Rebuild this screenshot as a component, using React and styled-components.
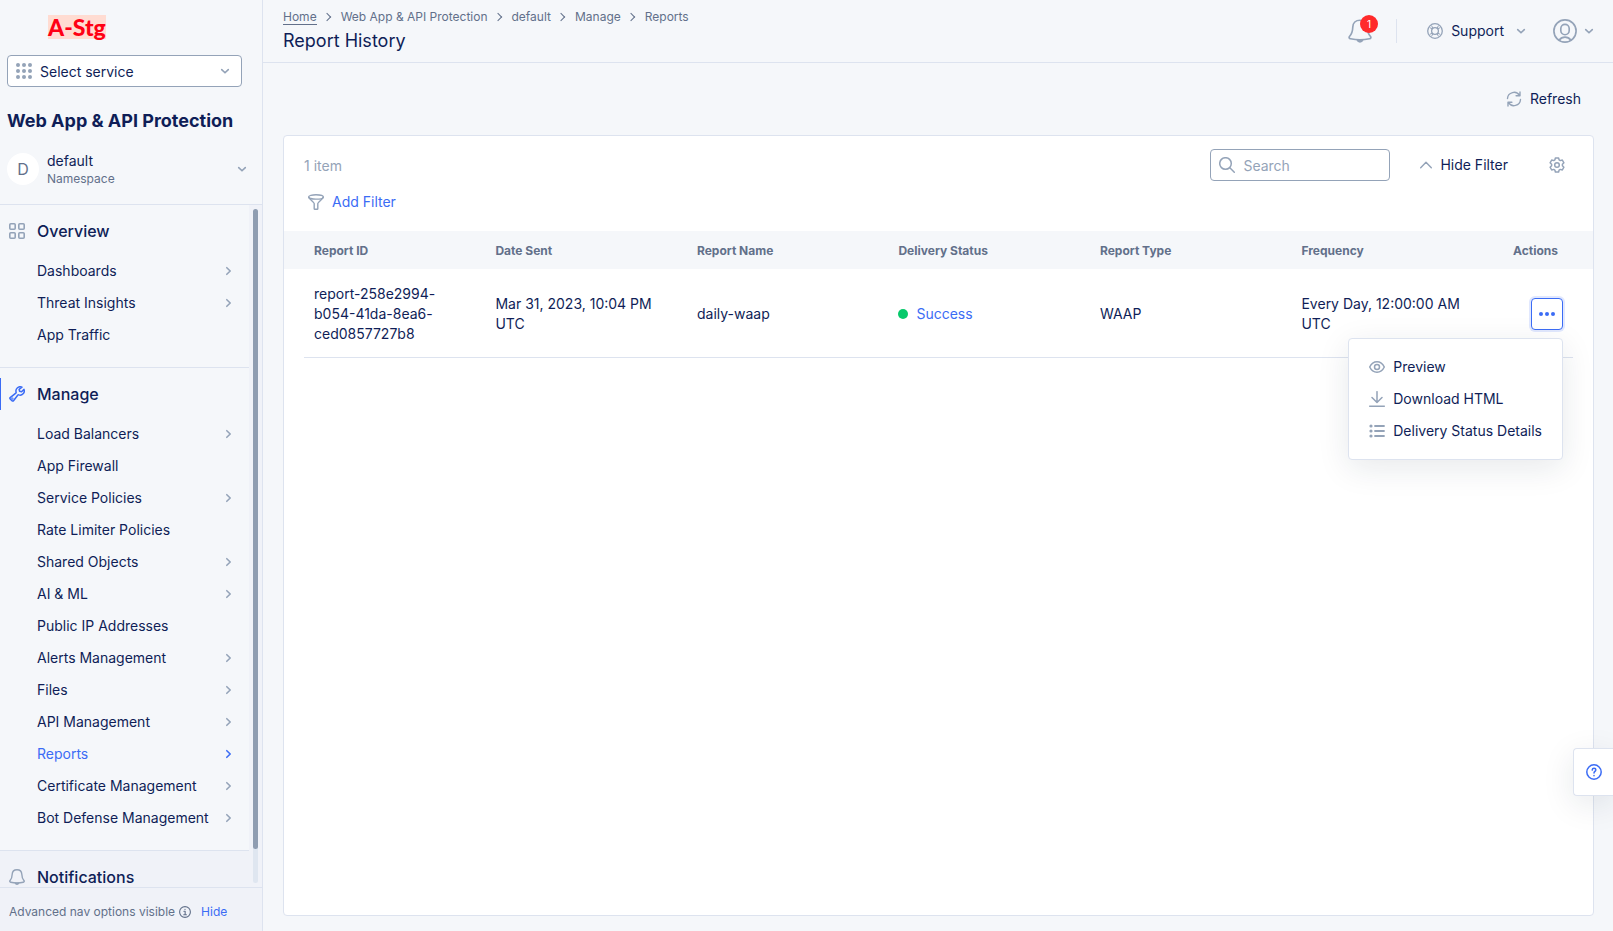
import { useState } from 'react'
import styled, { createGlobalStyle, css } from 'styled-components'

const navy = '#0f1e57'
const slate = '#62708a'
const steel = '#94a3b8'
const blue = '#3b6cf5'
const line = '#dde3ef'
const paper = '#f5f7fa'
const lilac = '#f0f2f8'

const GlobalStyle = createGlobalStyle`
    *, *::before, *::after {
        box-sizing: border-box;
    }
    body {
        margin: 0;
        background: ${paper};
        color: ${navy};
        font-family: Inter, 'Liberation Sans', sans-serif;
        font-size: 14px;
        line-height: 20px;
    }
    button, input, select {
        font: inherit;
        color: inherit;
    }
    button {
        padding: 0;
        border: 0;
        background: none;
        cursor: pointer;
    }
    a {
        color: inherit;
        text-decoration: none;
    }
    h1, h2, h3, ul, ol {
        margin: 0;
        padding: 0;
        list-style: none;
    }
`

const Shell = styled.div`
    display: flex;
    min-height: 100vh;
`

/* icons */

const Svg = styled.svg`
    display: block;
    flex: none;
    fill: none;
    stroke: ${props => props.$color || steel};
    stroke-width: ${props => props.$weight || 1.4};
    stroke-linecap: round;
    stroke-linejoin: round;
`

const Icon = ({ size = 16, color, weight, children }) => (
    <Svg width={size} height={size} viewBox="0 0 16 16" $color={color} $weight={weight} aria-hidden="true">
        {children}
    </Svg>
)

const chevrons = {
    right: 'M3.8 1.7 7.2 5 3.8 8.3',
    down: 'M1.7 3.6 5 6.8 8.3 3.6',
}

const Chevron = ({ to = 'right', color }) => (
    <Svg width="10" height="10" viewBox="0 0 10 10" $color={color} $weight={1.6} aria-hidden="true">
        <path d={chevrons[to]} />
    </Svg>
)

const DotsIcon = () => (
    <Icon>
        <g fill={steel} stroke="none">
            {[2, 8, 14].map(y => [2, 8, 14].map(x => <circle key={`${x}-${y}`} cx={x} cy={y} r="2" />))}
        </g>
    </Icon>
)

const GridIcon = () => (
    <Icon weight={1.6}>
        <rect x=".8" y=".8" width="5.400" height="5.400" rx="1" />
        <rect x="9.800" y=".8" width="5.400" height="5.400" rx="1" />
        <rect x=".8" y="9.800" width="5.400" height="5.400" rx="1" />
        <rect x="9.800" y="9.800" width="5.400" height="5.400" rx="1" />
    </Icon>
)

const WrenchIcon = () => (
    <Icon color={blue} weight={1.5}>
        <path d="M13 1.200a4.200 4.200 0 0 0-5.900 4.900c.1.4 0 .8-.3 1L1.200 11.600a1 1 0 0 0 0 1.400l1.800 1.800a1 1 0 0 0 1.500-.1l4.200-5.500c.3-.3.7-.4 1-.3a4.200 4.200 0 0 0 5.300-5.500l-2.400 2.300-2-.4-.5-2z" />
        <circle cx="3.400" cy="12.600" r=".4" />
    </Icon>
)

const BellIcon = ({ size, weight = 1.4 }) => (
    <Icon size={size} weight={weight}>
        <path d="M8 .8C5.100.8 3.300 2.800 3.200 5.300 3.100 8.300 2.800 9.600 1.100 11.500c-.7.8-.3 1.500.6 1.700 4 .8 8.600.8 12.600 0 .9-.2 1.300-.9.6-1.700C13.200 9.600 12.900 8.300 12.800 5.300 12.700 2.800 10.900.8 8 .8z" />
        <path d="M6.300 14.300c.6 1.200 2.800 1.200 3.400 0z" fill={steel} />
    </Icon>
)

const InfoIcon = () => (
    <Icon size={12} color={slate} weight={1.500}>
        <circle cx="8" cy="8" r="7.200" />
        <path d="M6.500 7h1.700v4.500M6.300 11.700h3.600M8 4.300v.3" />
    </Icon>
)

const SupportIcon = () => (
    <Icon weight={1.300}>
        <circle cx="8" cy="8" r="7.300" />
        <circle cx="8" cy="8" r="3.400" />
        <path d="M3 4.800l2.400 1M4.800 3l1 2.400M13 4.800l-2.400 1M11.200 3l-1 2.400M3 11.200l2.400-1M4.800 13l1-2.400M13 11.200l-2.400-1M11.200 13l-1-2.400" strokeWidth="1" />
    </Icon>
)

const PersonIcon = () => (
    <Icon size={24} weight={1.1}>
        <circle cx="8" cy="8" r="7.400" />
        <rect x="5.200" y="3.600" width="5.600" height="6.900" rx="2.800" />
        <path d="M4.200 14c1-1.400 2.200-1.900 3.800-1.900s2.800.5 3.800 1.900" />
    </Icon>
)

const RefreshIcon = () => (
    <Icon>
        <path d="M1.500 7.500A6.500 6.500 0 0 1 13.600 4.600M14 .9v3.900h-3.900M14.500 8.500A6.500 6.500 0 0 1 2.400 11.400M2 15.100v-3.900h3.900" />
    </Icon>
)

const SearchIcon = () => (
    <Icon weight={1.5}>
        <circle cx="6.500" cy="6.500" r="5.800" />
        <path d="M10.800 10.800l4.500 4.500" />
    </Icon>
)

const GearIcon = () => (
    <Icon weight={1.500}>
        <path d="M6.400.9h3.200l.5 2 1.200.7 2-.6 1.600 2.800-1.500 1.400v1.600l1.500 1.400-1.600 2.800-2-.6-1.200.7-.5 2H6.400l-.5-2-1.200-.7-2 .6-1.600-2.800 1.500-1.400V7.200L1.100 5.800 2.700 3l2 .6 1.200-.7z" />
        <circle cx="8" cy="8" r="2.300" />
    </Icon>
)

const FunnelIcon = () => (
    <Icon>
        <ellipse cx="8" cy="2.900" rx="7.300" ry="2.200" />
        <path d="M.7 3.200c.2 1.500 5.500 5 5.500 6.300v5.200c0 .4.3.6.7.6h2.200c.4 0 .7-.2.7-.6V9.500c0-1.300 5.300-4.800 5.500-6.300" />
    </Icon>
)

const EyeIcon = () => (
    <Icon weight={1.500}>
        <path d="M.7 8C2.300 4.600 4.900 2.800 8 2.800S13.700 4.600 15.300 8C13.700 11.400 11.100 13.200 8 13.200S2.300 11.400.7 8z" />
        <circle cx="8" cy="8" r="2.500" />
    </Icon>
)

const DownloadIcon = () => (
    <Icon weight={1.5}>
        <path d="M8 .7v10.600M3 6.500l5 5 5-5M.7 15.200h14.600" />
    </Icon>
)

const ListIcon = () => (
    <Icon weight={1.800}>
        <path d="M6 3h9M6 8h9M6 13h9" />
        <g fill={steel} stroke="none">
            <circle cx="2" cy="3" r="1.600" />
            <circle cx="2" cy="8" r="1.600" />
            <circle cx="2" cy="13" r="1.600" />
        </g>
    </Icon>
)

const MoreIcon = () => (
    <Icon>
        <g fill={blue} stroke="none">
            <circle cx="2" cy="8" r="2" />
            <circle cx="8" cy="8" r="2" />
            <circle cx="14" cy="8" r="2" />
        </g>
    </Icon>
)

const HelpIcon = () => (
    <Icon color={blue} weight={1.500}>
        <circle cx="8" cy="8" r="7.200" />
        <path d="M6.200 6.100C6.300 4.900 7 4.300 8 4.300s1.800.7 1.800 1.700c0 1.300-1.800 1.500-1.800 3M8 11.500v.2" />
    </Icon>
)

/* sidebar */

const Sidebar = styled.aside`
    position: sticky;
    top: 0;
    display: flex;
    flex-direction: column;
    flex: none;
    width: 263px;
    height: 100vh;
    border-right: 1px solid ${line};
`

const SidebarTop = styled.div`
    display: flex;
    flex-direction: column;
    padding: 15px 15px 17px 7px;
    border-bottom: 1px solid ${line};
`

const Logo = styled.a`
    align-self: flex-start;
    margin: 0 0 16px 41px;
    background: #ffdcd2;
    color: #ff0014;
    font-family: Lato, 'Open Sans', sans-serif;
    font-size: 23px;
    font-weight: 900;
    line-height: 24px;
`

const ServicePicker = styled.label`
    display: flex;
    align-items: center;
    gap: 8px;
    height: 32px;
    margin-right: 5px;
    padding: 0 11px 0 8px;
    border: 1px solid ${steel};
    border-radius: 4px;
    background: #fff;
`

const ServiceSelect = styled.select`
    flex: 1;
    min-width: 0;
    padding: 2px 0 0;
    border: 0;
    outline: 0;
    background: none;
    appearance: none;
`

const ProductName = styled.h2`
    margin: 22px 0 18px;
    font-size: 18px;
    font-weight: 700;
    line-height: 24px;
    white-space: nowrap;
`

const Namespace = styled.button`
    display: flex;
    align-items: center;
    gap: 8px;
    text-align: left;
`

const Initial = styled.span`
    display: flex;
    align-items: center;
    justify-content: center;
    width: 32px;
    height: 32px;
    border-radius: 50%;
    background: #fff;
    color: ${slate};
    font-size: 16px;
`

const NamespaceText = styled.span`
    display: flex;
    flex: 1;
    flex-direction: column;
    small {
        color: ${slate};
        font-size: 12px;
        line-height: 16px;
    }
`

const NavArea = styled.div`
    display: flex;
    flex: 1;
    min-height: 0;
    background: ${lilac};
`

const Nav = styled.nav`
    flex: 1;
    overflow-y: auto;
    scrollbar-width: none;
`

const Track = styled.div`
    flex: none;
    width: 5px;
    margin: 4px 4px;
    border-radius: 3px;
    background: #dfe6f0;
`

const Thumb = styled.div`
    height: 95%;
    border-radius: 3px;
    background: #8f9db1;
`

const Section = styled.section`
    padding: 10px 0 16px;
    border-bottom: 1px solid ${line};
    background: ${props => props.$soft ? lilac : paper};
`

const SectionTitle = styled.h3`
    display: flex;
    align-items: center;
    gap: 12px;
    height: 32px;
    margin-bottom: 8px;
    padding-left: 9px;
    font-size: 16px;
    font-weight: 500;
    ${props => props.$current && css`
        box-shadow: inset 1px 0 ${blue};
    `}
`

const NavLink = styled.a`
    display: flex;
    align-items: center;
    justify-content: space-between;
    height: 32px;
    padding: 0 16px 0 37px;
    color: ${props => props.$current ? blue : navy};
`

const NavFooter = styled.div`
    display: flex;
    align-items: center;
    height: 44px;
    padding: 4px 9px 0;
    gap: 4px;
    border-top: 1px solid ${line};
    background: ${lilac};
    color: ${slate};
    font-size: 12px;
`

const HideButton = styled.button`
    margin-left: 6px;
    color: ${blue};
`

/* top bar */

const Page = styled.div`
    display: flex;
    flex: 1;
    flex-direction: column;
    min-width: 0;
`

const TopBar = styled.header`
    display: flex;
    align-items: center;
    justify-content: space-between;
    height: 63px;
    padding: 0 19px 0 20px;
    border-bottom: 1px solid ${line};
`

const Crumbs = styled.ol`
    display: flex;
    align-items: center;
    margin-bottom: 4px;
    color: ${slate};
    font-size: 12px;
    line-height: 16px;
    li {
        display: flex;
        align-items: center;
    }
    li + li::before {
        content: '';
        width: 6px;
        height: 6px;
        margin: 0 11px 0 7px;
        border-top: 1px solid ${slate};
        border-right: 1px solid ${slate};
        transform: rotate(45deg);
    }
    li:first-child a {
        border-bottom: 1px solid ${slate};
        line-height: 14px;
    }
`

const Title = styled.h1`
    font-size: 18px;
    font-weight: 400;
    line-height: 24px;
`

const TopActions = styled.div`
    display: flex;
    align-items: center;
`

const Alerts = styled.button`
    position: relative;
    margin-right: 24px;
`

const Badge = styled.span`
    position: absolute;
    top: -4px;
    right: -6px;
    width: 18px;
    height: 18px;
    border-radius: 50%;
    background: #ff2a2a;
    color: #fff;
    font-size: 10px;
    line-height: 18px;
`

const SupportButton = styled.button`
    display: flex;
    align-items: center;
    gap: 8px;
    height: 24px;
    margin-right: 27px;
    padding-left: 30px;
    border-left: 1px solid ${line};
    svg:last-child {
        margin-left: 4px;
    }
`

const ProfileButton = styled.button`
    display: flex;
    align-items: center;
    gap: 7px;
`

/* content */

const Content = styled.main`
    display: flex;
    flex: 1;
    flex-direction: column;
    padding: 20px 19px 15px 20px;
`

const IconButton = styled.button`
    display: flex;
    align-items: center;
    gap: 8px;
    height: ${props => props.$tall ? 32 : 24}px;
    color: ${props => props.$link ? blue : navy};
`

const PageActions = styled.div`
    display: flex;
    justify-content: flex-end;
    margin-bottom: 20px;
    padding-right: 13px;
`

const Card = styled.section`
    flex: 1;
    border: 1px solid ${line};
    border-radius: 4px;
    background: #fff;
`

const Toolbar = styled.div`
    display: flex;
    align-items: center;
    padding: 13px 28px 9px 20px;
`

const Count = styled.span`
    flex: 1;
    padding-top: 2px;
    color: ${steel};
`

const SearchBox = styled.label`
    display: flex;
    align-items: center;
    gap: 8px;
    width: 180px;
    height: 32px;
    margin-right: 30px;
    padding: 0 8px;
    border: 1px solid ${steel};
    border-radius: 4px;
    input {
        flex: 1;
        min-width: 0;
        padding: 2px 0 0;
        border: 0;
        outline: 0;
        background: none;
    }
    input::placeholder {
        color: ${steel};
    }
`

const Settings = styled.button`
    margin-left: 41px;
`

const Filters = styled.div`
    padding: 0 24px 17px;
`

const TableWrap = styled.div`
    padding: 0 20px;
`

const Table = styled.table`
    width: 100%;
    table-layout: fixed;
    border-collapse: separate;
    border-spacing: 0;
    text-align: left;
    th {
        height: 38px;
        padding: 2px 10px 0;
        background: ${paper};
        color: ${slate};
        font-size: 12px;
        font-weight: 700;
    }
    th:first-child {
        width: 14.3%;
        box-shadow: -20px 0 ${paper};
    }
    th:last-child {
        width: 80px;
        padding-right: 15px;
        box-shadow: 20px 0 ${paper};
        text-align: right;
    }
    td {
        padding: 15px 10px 13px;
        border-bottom: 1px solid ${line};
    }
`

const ReportId = styled.div`
    max-width: 130px;
`

const Status = styled.a`
    display: flex;
    align-items: center;
    gap: 8px;
    color: ${blue};
    &::before {
        content: '';
        width: 10px;
        height: 10px;
        border-radius: 50%;
        background: #07c96b;
    }
`

const MenuAnchor = styled.div`
    position: relative;
    display: flex;
    justify-content: flex-end;
`

const MoreButton = styled.button`
    display: flex;
    align-items: center;
    justify-content: center;
    width: 32px;
    height: 32px;
    border: 1px solid ${blue};
    border-radius: 4px;
    background: #fff;
    box-shadow: 0 0 0 2px #e1e8fe;
`

const Menu = styled.ul`
    position: absolute;
    top: 40px;
    right: 0;
    z-index: 1;
    padding: 12px 20px;
    border: 1px solid ${line};
    border-radius: 4px;
    background: #fff;
    box-shadow: 0 8px 32px rgba(20, 40, 60, .1);
    white-space: nowrap;
`

const HelpTab = styled.button`
    position: fixed;
    right: 0;
    bottom: 135px;
    display: flex;
    align-items: center;
    width: 40px;
    height: 48px;
    padding-left: 12px;
    border: 1px solid ${line};
    border-right: 0;
    border-radius: 4px 0 0 4px;
    background: #fff;
    box-shadow: 0 8px 32px rgba(20, 40, 60, .1);
`

const overview = [
    { label: 'Dashboards', more: true },
    { label: 'Threat Insights', more: true },
    { label: 'App Traffic' },
]

const manage = [
    { label: 'Load Balancers', more: true },
    { label: 'App Firewall' },
    { label: 'Service Policies', more: true },
    { label: 'Rate Limiter Policies' },
    { label: 'Shared Objects', more: true },
    { label: 'AI & ML', more: true },
    { label: 'Public IP Addresses' },
    { label: 'Alerts Management', more: true },
    { label: 'Files', more: true },
    { label: 'API Management', more: true },
    { label: 'Reports', more: true, current: true },
    { label: 'Certificate Management', more: true },
    { label: 'Bot Defense Management', more: true },
]

const crumbs = ['Home', 'Web App & API Protection', 'default', 'Manage', 'Reports']
const columns = ['Report ID', 'Date Sent', 'Report Name', 'Delivery Status', 'Report Type', 'Frequency', 'Actions']

const NavList = ({ items }) => (
    <ul>
        {items.map(({ label, more, current }) => (
            <li key={label}>
                <NavLink href="#" $current={current}>
                    {label}
                    {more && <Chevron color={current ? blue : steel} />}
                </NavLink>
            </li>
        ))}
    </ul>
)

const App = () => {
    const [menuOpen, setMenuOpen] = useState(true)
    const [showFilter, setShowFilter] = useState(true)
    const [search, setSearch] = useState('')

    return (
        <Shell>
            <GlobalStyle />
            <Sidebar>
                <SidebarTop>
                    <Logo href="#">A-Stg</Logo>
                    <ServicePicker>
                        <DotsIcon />
                        <ServiceSelect aria-label="Select service">
                            <option>Select service</option>
                        </ServiceSelect>
                        <Chevron to="down" />
                    </ServicePicker>
                    <ProductName>Web App & API Protection</ProductName>
                    <Namespace>
                        <Initial>D</Initial>
                        <NamespaceText>
                            default
                            <small>Namespace</small>
                        </NamespaceText>
                        <Chevron to="down" />
                    </Namespace>
                </SidebarTop>
                <NavArea>
                    <Nav>
                        <Section>
                            <SectionTitle><GridIcon />Overview</SectionTitle>
                            <NavList items={overview} />
                        </Section>
                        <Section>
                            <SectionTitle $current><WrenchIcon />Manage</SectionTitle>
                            <NavList items={manage} />
                        </Section>
                        <Section $soft>
                            <SectionTitle><BellIcon />Notifications</SectionTitle>
                        </Section>
                    </Nav>
                    <Track><Thumb /></Track>
                </NavArea>
                <NavFooter>
                    Advanced nav options visible
                    <InfoIcon />
                    <HideButton>Hide</HideButton>
                </NavFooter>
            </Sidebar>

            <Page>
                <TopBar>
                    <div>
                        <Crumbs>
                            {crumbs.map(name => <li key={name}><a href="#">{name}</a></li>)}
                        </Crumbs>
                        <Title>Report History</Title>
                    </div>
                    <TopActions>
                        <Alerts aria-label="Alerts">
                            <BellIcon size={24} weight={1.1} />
                            <Badge>1</Badge>
                        </Alerts>
                        <SupportButton>
                            <SupportIcon />
                            Support
                            <Chevron to="down" />
                        </SupportButton>
                        <ProfileButton aria-label="Profile">
                            <PersonIcon />
                            <Chevron to="down" />
                        </ProfileButton>
                    </TopActions>
                </TopBar>

                <Content>
                    <PageActions>
                        <IconButton $tall><RefreshIcon />Refresh</IconButton>
                    </PageActions>
                    <Card>
                        <Toolbar>
                            <Count>1 item</Count>
                            <SearchBox>
                                <SearchIcon />
                                <input
                                    type="text"
                                    placeholder="Search"
                                    aria-label="Search"
                                    value={search}
                                    onChange={e => setSearch(e.target.value)}
                                />
                            </SearchBox>
                            <IconButton $tall onClick={() => setShowFilter(!showFilter)}>
                                <Svg width="12" height="8" viewBox="0 0 12 8" aria-hidden="true">
                                    <path d="M.7 6.800 6 1.200l5.300 5.600" />
                                </Svg>
                                Hide Filter
                            </IconButton>
                            <Settings aria-label="Settings"><GearIcon /></Settings>
                        </Toolbar>
                        {showFilter &&
                            <Filters>
                                <IconButton $link><FunnelIcon />Add Filter</IconButton>
                            </Filters>}
                        <TableWrap>
                            <Table>
                                <thead>
                                    <tr>
                                        {columns.map(name => <th key={name} scope="col">{name}</th>)}
                                    </tr>
                                </thead>
                                <tbody>
                                    <tr>
                                        <td><ReportId>report-258e2994-b054-41da-8ea6-ced0857727b8</ReportId></td>
                                        <td>Mar 31, 2023, 10:04 PM UTC</td>
                                        <td>daily-waap</td>
                                        <td><Status href="#">Success</Status></td>
                                        <td>WAAP</td>
                                        <td>Every Day, 12:00:00 AM UTC</td>
                                        <td>
                                            <MenuAnchor>
                                                <MoreButton
                                                    aria-label="Actions"
                                                    aria-expanded={menuOpen}
                                                    onClick={() => setMenuOpen(!menuOpen)}
                                                >
                                                    <MoreIcon />
                                                </MoreButton>
                                                {menuOpen &&
                                                    <Menu>
                                                        <li><IconButton $tall><EyeIcon />Preview</IconButton></li>
                                                        <li><IconButton $tall><DownloadIcon />Download HTML</IconButton></li>
                                                        <li><IconButton $tall><ListIcon />Delivery Status Details</IconButton></li>
                                                    </Menu>}
                                            </MenuAnchor>
                                        </td>
                                    </tr>
                                </tbody>
                            </Table>
                        </TableWrap>
                    </Card>
                </Content>
            </Page>
            <HelpTab aria-label="Help"><HelpIcon /></HelpTab>
        </Shell>
    )
}

export default App
